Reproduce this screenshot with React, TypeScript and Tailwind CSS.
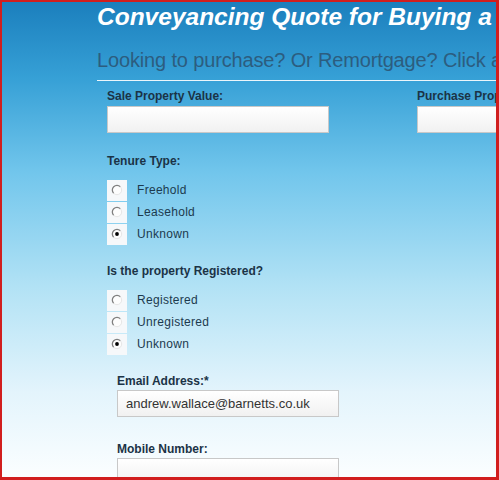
import React from "react";

type RadioOption = { label: string; checked?: boolean };

const tenure: RadioOption[] = [
  { label: "Freehold" },
  { label: "Leasehold" },
  { label: "Unknown", checked: true },
];

const registered: RadioOption[] = [
  { label: "Registered" },
  { label: "Unregistered" },
  { label: "Unknown", checked: true },
];

// classic sunken radio: dark upper-left arc, pale lower-right arc
const RadioMark = ({ checked }: { checked?: boolean }) => (
  <svg width="12" height="12" viewBox="0 0 12 12">
    <circle cx="6" cy="6" r="4.6" fill="#fdfdfd" />
    <path d="M2.7 9.3 A4.6 4.6 0 0 1 9.3 2.7" fill="none" stroke="#808080" strokeWidth="1.3" />
    <path d="M9.3 2.7 A4.6 4.6 0 0 1 2.7 9.3" fill="none" stroke="#e6e6e6" strokeWidth="1" />
    {checked && <circle cx="6" cy="6" r="1.9" fill="#000" />}
  </svg>
);

const RadioGroup = ({ options }: { options: RadioOption[] }) => (
  <div className="mt-[11px] flex flex-col">
    {options.map((o) => (
      <div key={o.label} className="flex h-[22px] items-center">
        <div className="flex h-[21px] w-[20px] items-center justify-center bg-[#f6f8fa]">
          <RadioMark checked={o.checked} />
        </div>
        <span className="ml-[10px] text-[12px] leading-[14px] tracking-[0.3px] text-[#1c3a4e]">
          {o.label}
        </span>
      </div>
    ))}
  </div>
);

const Label = ({ children, className = "" }: { children: React.ReactNode; className?: string }) => (
  <div className={`text-[12px] font-bold leading-[14px] text-[#1b3346] ${className}`}>
    {children}
  </div>
);

const TextBox = ({ value, className = "" }: { value?: string; className?: string }) => (
  <div
    className={`h-[27px] w-[222px] border border-[#c8c8c8] bg-[linear-gradient(180deg,#ffffff,#f1f1f1)] px-[8px] text-[13px] leading-[25px] text-[#333] ${className}`}
  >
    {value}
  </div>
);

export default function App() {
  return (
    <div
      className="h-[480px] w-[499px] overflow-hidden border-t-2 border-r-[3px] border-b-[3px] border-l-2 border-[#d11e1e] bg-[linear-gradient(180deg,#1b7fbd_0%,#36a0d6_16%,#72c6ec_36%,#b2e2f5_60%,#e3f4fc_82%,#fbfeff_100%)]"
      style={{ fontFamily: '"Liberation Sans", Arial, sans-serif' }}
    >
      <div className="pl-[95px]">
        <h1 className="whitespace-nowrap pt-px text-[24.5px] font-bold italic leading-[28px] text-white">
          Conveyancing Quote for Buying a Property
        </h1>
        <p className="mt-[17px] whitespace-nowrap text-[20px] leading-[24px] tracking-[-0.15px] text-[#2c5d7f]">
          Looking to purchase? Or Remortgage? Click a link below
        </p>
        <div className="mt-[8px] h-px bg-white/90" />

        <div className="pl-[10px]">
          <div className="mt-[8px] flex gap-[88px]">
            <div className="w-[222px] shrink-0">
              <Label>Sale Property Value:</Label>
              <TextBox className="mt-[3px]" />
            </div>
            <div className="w-[222px] shrink-0">
              <Label className="whitespace-nowrap">Purchase Property Value:</Label>
              <TextBox className="mt-[3px]" />
            </div>
          </div>

          <Label className="mt-[21px]">Tenure Type:</Label>
          <RadioGroup options={tenure} />

          <Label className="mt-[19px]">Is the property Registered?</Label>
          <RadioGroup options={registered} />

          <div className="pl-[10px]">
            <Label className="mt-[19px]">Email Address:*</Label>
            <TextBox className="mt-[2px]" value="andrew.wallace@barnetts.co.uk" />
            <Label className="mt-[25px]">Mobile Number:</Label>
            <TextBox className="mt-[2px]" />
          </div>
        </div>
      </div>
    </div>
  );
}
